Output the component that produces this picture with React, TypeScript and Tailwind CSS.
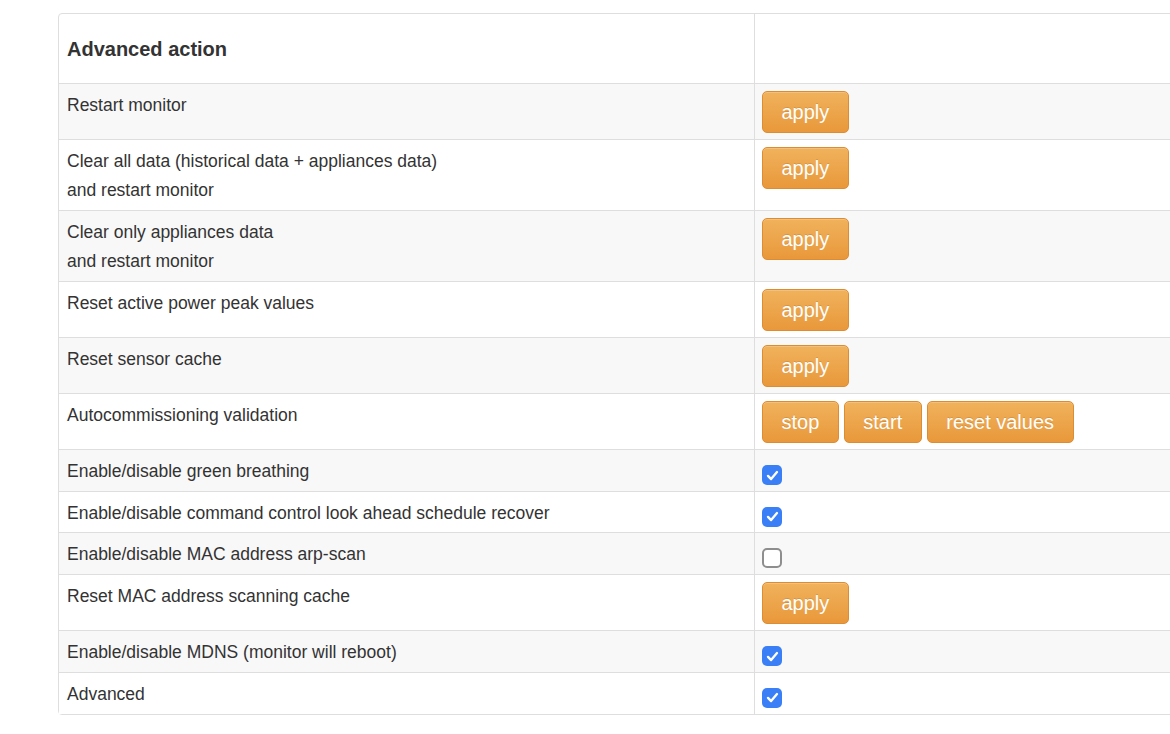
import React from "react";

type Row =
  | { label: string[]; kind: "button"; buttons: string[] }
  | { label: string[]; kind: "check"; checked: boolean };

const rows: Row[] = [
  { label: ["Restart monitor"], kind: "button", buttons: ["apply"] },
  {
    label: ["Clear all data (historical data + appliances data)", "and restart monitor"],
    kind: "button",
    buttons: ["apply"],
  },
  { label: ["Clear only appliances data", "and restart monitor"], kind: "button", buttons: ["apply"] },
  { label: ["Reset active power peak values"], kind: "button", buttons: ["apply"] },
  { label: ["Reset sensor cache"], kind: "button", buttons: ["apply"] },
  { label: ["Autocommissioning validation"], kind: "button", buttons: ["stop", "start", "reset values"] },
  { label: ["Enable/disable green breathing"], kind: "check", checked: true },
  { label: ["Enable/disable command control look ahead schedule recover"], kind: "check", checked: true },
  { label: ["Enable/disable MAC address arp-scan"], kind: "check", checked: false },
  { label: ["Reset MAC address scanning cache"], kind: "button", buttons: ["apply"] },
  { label: ["Enable/disable MDNS (monitor will reboot)"], kind: "check", checked: true },
  { label: ["Advanced"], kind: "check", checked: true },
];

function OrangeButton({ children }: { children: string }) {
  return (
    <button className="h-[42px] px-[18.5px] rounded-[5px] border border-[#dc8d34] bg-gradient-to-b from-[#f0b25b] to-[#e9983a] text-white text-[20px] leading-none [text-shadow:0_-1px_0_rgba(0,0,0,0.12)] shadow-[inset_0_1px_0_rgba(255,255,255,0.2)]">
      {children}
    </button>
  );
}

function Check({ checked }: { checked: boolean }) {
  if (!checked) {
    return <span className="block w-[20px] h-[20px] rounded-[5px] border-2 border-[#8e8e8e] bg-white" />;
  }
  return (
    <span className="flex items-center justify-center w-[20px] h-[20px] rounded-[5px] bg-[#3a7ff6]">
      <svg width="15" height="15" viewBox="0 0 16 16" fill="none">
        <path d="M3.2 8.4 6.5 11.8 12.8 4.3" stroke="white" strokeWidth="2.5" strokeLinecap="round" strokeLinejoin="round" />
      </svg>
    </span>
  );
}

export default function App() {
  return (
    <div className="w-[1170px] h-[734px] overflow-hidden bg-white font-['Liberation_Sans',Arial,sans-serif] text-[#333]">
      <div className="pt-[13px] pl-[58px]">
        <table className="w-[1200px] border-separate border-spacing-0 border border-[#dedede] rounded-[4px] text-[17.5px]">
          <thead>
            <tr>
              <th className="w-[696px] h-[69px] text-left align-middle pl-[8px] text-[20px] font-bold border-r border-[#dedede]">
                Advanced action
              </th>
              <th />
            </tr>
          </thead>
          <tbody>
            {rows.map((row, i) => {
              const bg = i % 2 === 0 ? "bg-[#f8f8f8]" : "bg-white";
              return (
                <tr key={i} className={bg}>
                  <td className="align-top border-t border-r border-[#dedede] px-[8px] pt-[9px] pb-[7px] leading-[24.7px]">
                    {row.label.map((l, j) => (
                      <div key={j} className={j > 0 ? "mt-[4.6px]" : ""}>
                        {l}
                      </div>
                    ))}
                  </td>
                  {row.kind === "button" ? (
                    <td className="align-top border-t border-[#dedede] pl-[7px] pt-[7px] pb-[6px]">
                      <div className="flex gap-[5px]">
                        {row.buttons.map((b) => (
                          <OrangeButton key={b}>{b}</OrangeButton>
                        ))}
                      </div>
                    </td>
                  ) : (
                    <td className="align-top border-t border-[#dedede] pl-[7px] pt-[15px]">
                      <Check checked={row.checked} />
                    </td>
                  )}
                </tr>
              );
            })}
          </tbody>
        </table>
      </div>
    </div>
  );
}
